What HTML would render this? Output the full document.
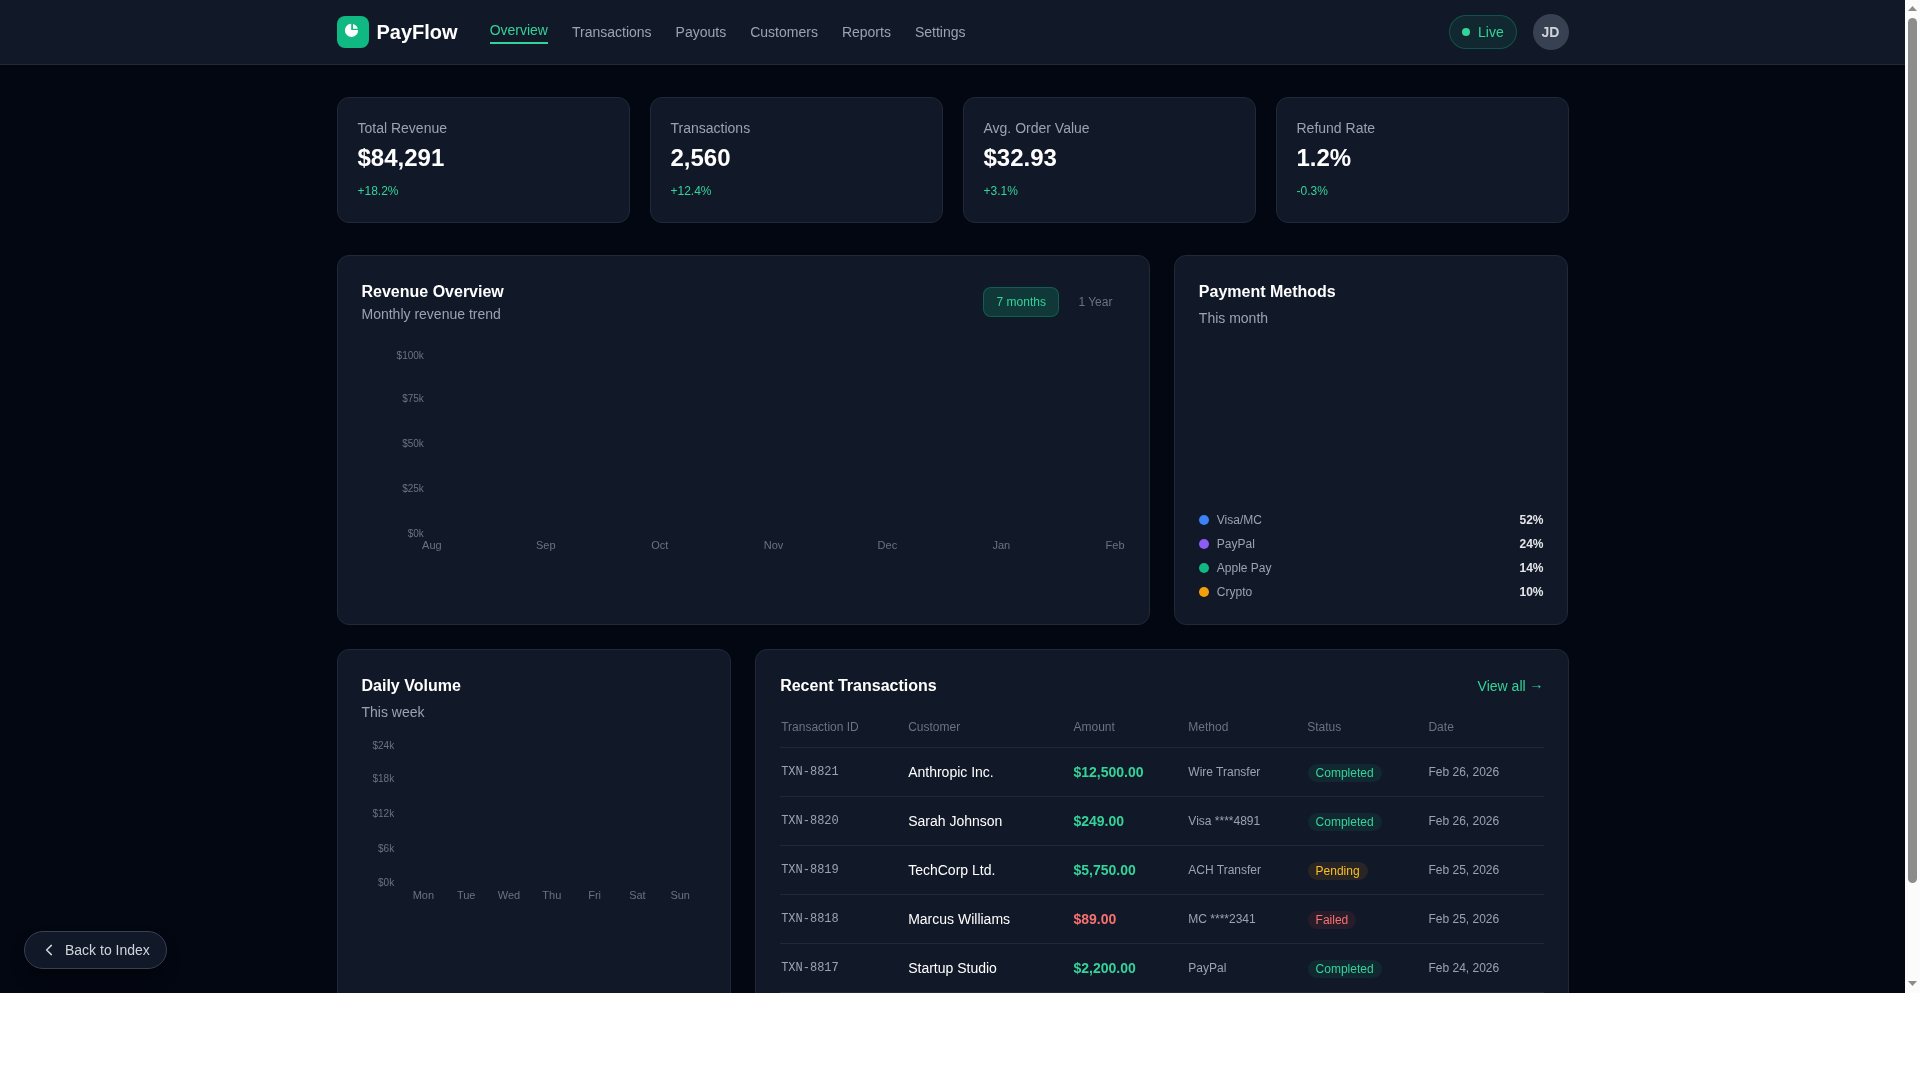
<!DOCTYPE html>
<html><head><meta charset="utf-8">
<style>
*{box-sizing:border-box;margin:0;padding:0}
html,body{width:1920px;height:1080px;background:#fff;overflow:hidden}
body{font-family:"Liberation Sans",sans-serif;color:#f3f4f6}
#vp{position:absolute;left:0;top:0;width:1905px;height:993px;background:#030712;overflow:hidden;will-change:transform}
#sb{position:absolute;left:1905px;top:0;width:15px;height:993px;background:#fbfbfb}
.hdr{position:absolute;left:0;top:0;width:1905px;height:65px;background:#111827;border-bottom:1px solid #1f2937}
.wrap{width:1280px;margin:0 auto;padding:0 24px;position:relative;height:100%}
.abs{position:absolute}
.main{position:absolute;left:312.5px;top:65px;width:1280px;padding:32px 24px}
.card{background:#111827;border:1px solid #1f2937;border-radius:12px;position:relative}
.stats{display:grid;grid-template-columns:repeat(4,1fr);gap:20px;margin-bottom:32px}
.stat{height:126px;padding:20px}
.lbl{font-size:14px;line-height:20px;color:#9ca3af}
.val{font-size:24px;line-height:32px;font-weight:700;color:#fff;margin-top:4px}
.chg{font-size:12px;line-height:16px;color:#34d399;margin-top:9px}
.row3{display:grid;grid-template-columns:repeat(3,1fr);gap:24px}
.h3{font-size:16px;line-height:24px;font-weight:700;color:#fff}
.sub{font-size:14px;line-height:20px;color:#9ca3af}
.ax{position:absolute;font-size:10px;line-height:12px;color:#6b7280;white-space:nowrap}
.axx{position:absolute;font-size:11px;line-height:12px;color:#6b7280;white-space:nowrap;transform:translateX(-50%)}
.th{top:0;font-size:12px;line-height:16px;color:#6b7280;white-space:nowrap}
.tr{left:0;width:764px;height:49px;border-bottom:1px solid #1f2937}
.tid{top:16px;font-family:"Liberation Mono",monospace;font-size:12px;line-height:16px;color:#9ca3af;white-space:nowrap}
.tcu{top:14px;font-size:14px;line-height:20px;color:#fff;white-space:nowrap}
.tam{top:14px;font-size:14px;line-height:20px;font-weight:700;white-space:nowrap}
.tme{top:16px;font-size:12px;line-height:16px;color:#9ca3af;white-space:nowrap}
.bdg{top:16px;font-size:12px;line-height:16px;padding:1px 8px;border-radius:999px;white-space:nowrap}
</style></head><body>
<div id="vp">
  <div class="hdr"><div class="wrap">
    <div class="abs" style="left:24px;top:16px;width:32px;height:32px;border-radius:8px;background:#10b981">
      <svg width="32" height="32" viewBox="0 0 32 32" style="position:absolute;left:0;top:0">
        <path d="M14.2 13.9 L14.2 7.80 A6.6 6.6 0 1 0 21.03 13.9 Z" fill="#fff"/>
        <path d="M16.00 12.70 L16.00 7.98 A6.6 6.6 0 0 1 20.83 12.70 Z" fill="#fff"/>
      </svg>
    </div>
    <div class="abs" style="left:64px;top:18px;font-size:20px;line-height:28px;font-weight:700;color:#fff">PayFlow</div>
    <div class="abs" style="left:177.14px;top:20px;display:flex;gap:24px;align-items:flex-start;font-size:14px;line-height:20px;white-space:nowrap">
      <div style="color:#34d399;position:relative">Overview<div class="abs" style="left:0;right:0;top:22px;height:2px;background:#34d399"></div></div>
      <div style="color:#9ca3af;margin-top:2px">Transactions</div>
      <div style="color:#9ca3af;margin-top:2px">Payouts</div>
      <div style="color:#9ca3af;margin-top:2px">Customers</div>
      <div style="color:#9ca3af;margin-top:2px">Reports</div>
      <div style="color:#9ca3af;margin-top:2px">Settings</div>
    </div>
    <div class="abs" style="left:1136.5px;top:15px;width:68px;height:34px;border-radius:999px;background:rgba(16,185,129,.1);border:1px solid rgba(16,185,129,.3)">
      <div class="abs" style="left:12px;top:12px;width:8px;height:8px;border-radius:50%;background:#34d399"></div>
      <div class="abs" style="left:28px;top:6px;font-size:14px;line-height:20px;color:#34d399">Live</div>
    </div>
    <div class="abs" style="left:1220.5px;top:14px;width:36px;height:36px;border-radius:50%;background:#374151;color:#d1d5db;font-size:14px;line-height:36px;font-weight:700;text-align:center;padding-right:1px">JD</div>
  </div></div>

  <div class="main">
    <div class="stats">
      <div class="card stat"><div class="lbl">Total Revenue</div><div class="val">$84,291</div><div class="chg">+18.2%</div></div>
      <div class="card stat"><div class="lbl">Transactions</div><div class="val">2,560</div><div class="chg">+12.4%</div></div>
      <div class="card stat"><div class="lbl">Avg. Order Value</div><div class="val">$32.93</div><div class="chg">+3.1%</div></div>
      <div class="card stat"><div class="lbl">Refund Rate</div><div class="val">1.2%</div><div class="chg">-0.3%</div></div>
    </div>

    <div class="row3" style="margin-bottom:24px">
      <div class="card" style="grid-column:span 2;height:370px;padding:24px">
        <div class="h3">Revenue Overview</div>
        <div class="sub">Monthly revenue trend</div>
        <div class="abs" style="right:23.4px;top:31px;display:flex;gap:6px">
          <div style="font-size:12px;line-height:16px;padding:6px 12.5px 6px 12.5px;border-radius:8px;border:1px solid rgba(16,185,129,.3);background:rgba(16,185,129,.2);color:#34d399">7 months</div>
          <div style="font-size:12px;line-height:16px;padding:6px 12px;border-radius:8px;border:1px solid transparent;color:#6b7280">1 Year</div>
        </div>
        <!-- y axis -->
        <div class="ax" style="right:725px;top:94px">$100k</div>
        <div class="ax" style="right:725px;top:137px">$75k</div>
        <div class="ax" style="right:725px;top:182px">$50k</div>
        <div class="ax" style="right:725px;top:227px">$25k</div>
        <div class="ax" style="right:725px;top:272px">$0k</div>
        <div class="axx" style="left:94.4px;top:283px">Aug</div>
        <div class="axx" style="left:208.3px;top:283px">Sep</div>
        <div class="axx" style="left:322.2px;top:283px">Oct</div>
        <div class="axx" style="left:436px;top:283px">Nov</div>
        <div class="axx" style="left:549.9px;top:283px">Dec</div>
        <div class="axx" style="left:663.8px;top:283px">Jan</div>
        <div class="axx" style="left:777.6px;top:283px">Feb</div>
      </div>
      <div class="card" style="height:370px;padding:24px">
        <div class="h3">Payment Methods</div>
        <div class="sub" style="margin-top:4px">This month</div>
        <div class="abs" style="left:24px;right:24px;top:256px">
          <div style="display:flex;align-items:center;height:16px;font-size:12px;line-height:16px"><span style="width:10px;height:10px;border-radius:50%;background:#3b82f6;margin-right:8px"></span><span style="color:#9ca3af;flex:1">Visa/MC</span><span style="font-weight:700;color:#e5e7eb">52%</span></div>
          <div style="display:flex;align-items:center;height:16px;margin-top:8px;font-size:12px;line-height:16px"><span style="width:10px;height:10px;border-radius:50%;background:#8b5cf6;margin-right:8px"></span><span style="color:#9ca3af;flex:1">PayPal</span><span style="font-weight:700;color:#e5e7eb">24%</span></div>
          <div style="display:flex;align-items:center;height:16px;margin-top:8px;font-size:12px;line-height:16px"><span style="width:10px;height:10px;border-radius:50%;background:#10b981;margin-right:8px"></span><span style="color:#9ca3af;flex:1">Apple Pay</span><span style="font-weight:700;color:#e5e7eb">14%</span></div>
          <div style="display:flex;align-items:center;height:16px;margin-top:8px;font-size:12px;line-height:16px"><span style="width:10px;height:10px;border-radius:50%;background:#f59e0b;margin-right:8px"></span><span style="color:#9ca3af;flex:1">Crypto</span><span style="font-weight:700;color:#e5e7eb">10%</span></div>
        </div>
      </div>
    </div>

    <div class="row3">
      <div class="card" style="height:500px;padding:24px">
        <div class="h3">Daily Volume</div>
        <div class="sub" style="margin-top:4px">This week</div>
        <div class="ax" style="right:336px;top:90px">$24k</div>
        <div class="ax" style="right:336px;top:123px">$18k</div>
        <div class="ax" style="right:336px;top:158px">$12k</div>
        <div class="ax" style="right:336px;top:193px">$6k</div>
        <div class="ax" style="right:336px;top:227px">$0k</div>
        <div class="axx" style="left:85.9px;top:239px">Mon</div>
        <div class="axx" style="left:128.7px;top:239px">Tue</div>
        <div class="axx" style="left:171.5px;top:239px">Wed</div>
        <div class="axx" style="left:214.3px;top:239px">Thu</div>
        <div class="axx" style="left:257.1px;top:239px">Fri</div>
        <div class="axx" style="left:299.9px;top:239px">Sat</div>
        <div class="axx" style="left:342.7px;top:239px">Sun</div>
      </div>
      <div class="card" style="grid-column:span 2;height:500px;padding:24px">
        <div style="display:flex;justify-content:space-between;align-items:center;height:24px">
          <div class="h3">Recent Transactions</div>
          <div style="font-size:14px;line-height:20px;color:#34d399">View all <span style="position:relative;top:-2px">→</span></div>
        </div>
        <div class="abs" style="left:24px;top:69px;width:764px;height:700px">
<div class="abs" style="left:0;top:0;width:764px;height:29px;border-bottom:1px solid #1f2937">
<div class="abs th" style="left:1px">Transaction ID</div>
<div class="abs th" style="left:128px">Customer</div>
<div class="abs th" style="left:293.3px">Amount</div>
<div class="abs th" style="left:408.2px">Method</div>
<div class="abs th" style="left:527px">Status</div>
<div class="abs th" style="left:648.3px">Date</div>
</div>
<div class="abs tr" style="top:29px">
<div class="abs tid" style="left:1px">TXN-8821</div>
<div class="abs tcu" style="left:128px">Anthropic Inc.</div>
<div class="abs tam" style="left:293.3px;color:#34d399">$12,500.00</div>
<div class="abs tme" style="left:408.2px">Wire Transfer</div>
<div class="abs bdg" style="left:527.4px;background:rgba(16,185,129,.1);color:#34d399">Completed</div>
<div class="abs tme" style="left:648.3px">Feb 26, 2026</div>
</div>
<div class="abs tr" style="top:78px">
<div class="abs tid" style="left:1px">TXN-8820</div>
<div class="abs tcu" style="left:128px">Sarah Johnson</div>
<div class="abs tam" style="left:293.3px;color:#34d399">$249.00</div>
<div class="abs tme" style="left:408.2px">Visa ****4891</div>
<div class="abs bdg" style="left:527.4px;background:rgba(16,185,129,.1);color:#34d399">Completed</div>
<div class="abs tme" style="left:648.3px">Feb 26, 2026</div>
</div>
<div class="abs tr" style="top:127px">
<div class="abs tid" style="left:1px">TXN-8819</div>
<div class="abs tcu" style="left:128px">TechCorp Ltd.</div>
<div class="abs tam" style="left:293.3px;color:#34d399">$5,750.00</div>
<div class="abs tme" style="left:408.2px">ACH Transfer</div>
<div class="abs bdg" style="left:527.4px;background:rgba(245,158,11,.1);color:#fbbf24">Pending</div>
<div class="abs tme" style="left:648.3px">Feb 25, 2026</div>
</div>
<div class="abs tr" style="top:176px">
<div class="abs tid" style="left:1px">TXN-8818</div>
<div class="abs tcu" style="left:128px">Marcus Williams</div>
<div class="abs tam" style="left:293.3px;color:#f87171">$89.00</div>
<div class="abs tme" style="left:408.2px">MC ****2341</div>
<div class="abs bdg" style="left:527.4px;background:rgba(239,68,68,.1);color:#f87171">Failed</div>
<div class="abs tme" style="left:648.3px">Feb 25, 2026</div>
</div>
<div class="abs tr" style="top:225px">
<div class="abs tid" style="left:1px">TXN-8817</div>
<div class="abs tcu" style="left:128px">Startup Studio</div>
<div class="abs tam" style="left:293.3px;color:#34d399">$2,200.00</div>
<div class="abs tme" style="left:408.2px">PayPal</div>
<div class="abs bdg" style="left:527.4px;background:rgba(16,185,129,.1);color:#34d399">Completed</div>
<div class="abs tme" style="left:648.3px">Feb 24, 2026</div>
</div>
</div>
      </div>
    </div>
  </div>

  <div class="abs" style="left:24px;top:931px;height:38px;width:143px;border-radius:999px;background:#111827;border:1px solid #374151;box-shadow:0 10px 15px -3px rgba(0,0,0,.5)">
    <svg class="abs" style="left:0;top:0" width="143" height="38"><polyline points="26.35,13.4 21.6,18 26.35,22.6" fill="none" stroke="#d1d5db" stroke-width="1.5" stroke-linecap="round" stroke-linejoin="round"/></svg>
    <div class="abs" style="left:40px;top:8px;font-size:14px;line-height:20px;color:#d1d5db;white-space:nowrap">Back to Index</div>
  </div>
</div>
<div id="sb">
  <svg width="15" height="993" style="position:absolute;left:0;top:0">
    <polygon points="3,11 7.5,6 12,11" fill="#8c8c8c"/>
    <rect x="3" y="18" width="9" height="865" rx="4.5" fill="#8c8c8c"/>
    <polygon points="3,981 7.5,986 12,981" fill="#8c8c8c"/>
  </svg>
</div>
</body></html>
